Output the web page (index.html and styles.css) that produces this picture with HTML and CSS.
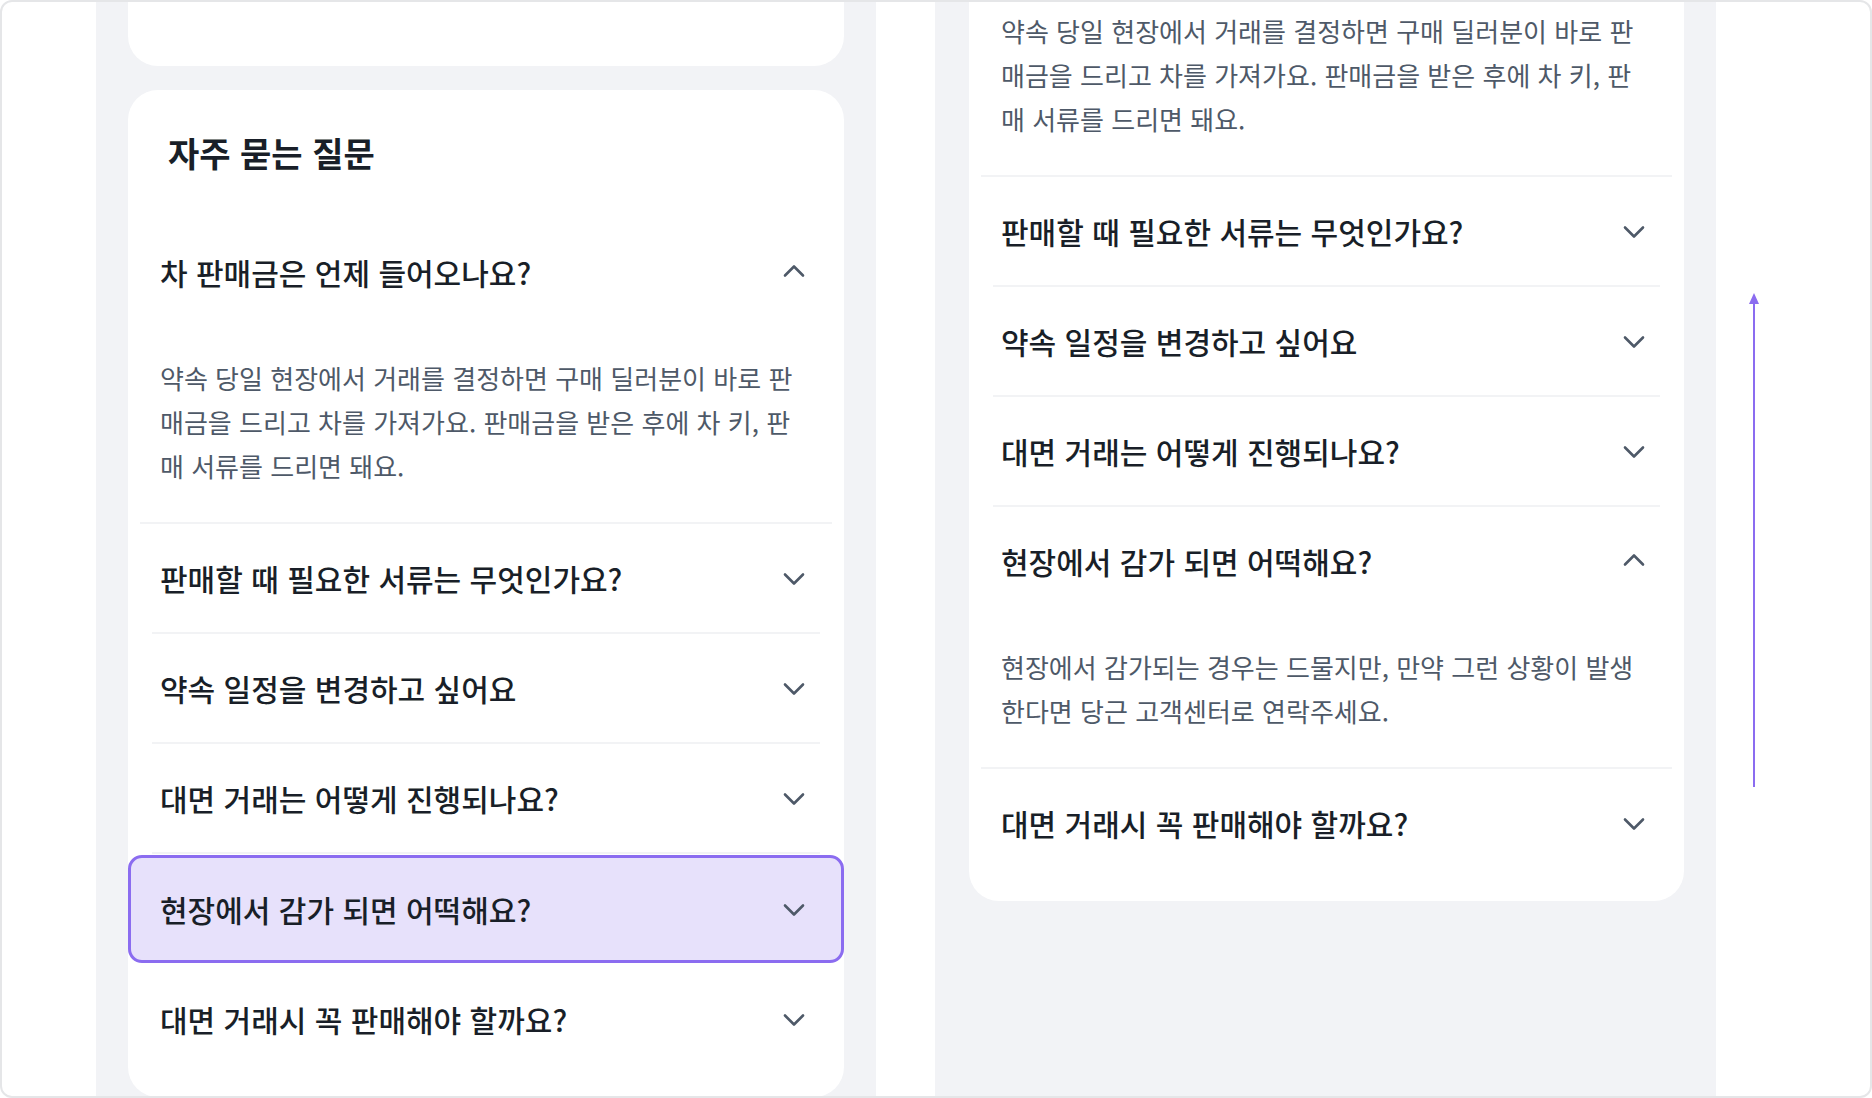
FILE: index.html
```html
<!DOCTYPE html>
<html lang="ko">
<head>
    <meta charset="UTF-8">
    <title>자주 묻는 질문</title>
    <link rel="stylesheet" href="styles.css">
</head>
<body>
    <div class="frame">
        <div class="blank-left"></div>

        <!-- left phone: list with a pressed item -->
        <section class="panel">
            <div class="card card-tail"></div>

            <div class="card faq">
                <h2 class="faq-title">자주 묻는 질문</h2>

                <div class="faq-item open">
                    <div class="question">
                        <span>차 판매금은 언제 들어오나요?</span>
                        <svg class="chevron" viewBox="0 0 24 24"><path d="M3 15.5 12 6.5 21 15.5"/></svg>
                    </div>
                    <p class="answer">약속 당일 현장에서 거래를 결정하면 구매 딜러분이 바로 판매금을 드리고 차를 가져가요. 판매금을 받은 후에 차 키, 판매 서류를 드리면 돼요.</p>
                </div>
                <div class="divider wide"></div>

                <div class="question">
                    <span>판매할 때 필요한 서류는 무엇인가요?</span>
                    <svg class="chevron" viewBox="0 0 24 24"><path d="M3 8.5 12 17.5 21 8.5"/></svg>
                </div>
                <div class="divider"></div>

                <div class="question">
                    <span>약속 일정을 변경하고 싶어요</span>
                    <svg class="chevron" viewBox="0 0 24 24"><path d="M3 8.5 12 17.5 21 8.5"/></svg>
                </div>
                <div class="divider"></div>

                <div class="question">
                    <span>대면 거래는 어떻게 진행되나요?</span>
                    <svg class="chevron" viewBox="0 0 24 24"><path d="M3 8.5 12 17.5 21 8.5"/></svg>
                </div>
                <div class="divider"></div>

                <div class="question pressed">
                    <span>현장에서 감가 되면 어떡해요?</span>
                    <svg class="chevron" viewBox="0 0 24 24"><path d="M3 8.5 12 17.5 21 8.5"/></svg>
                </div>

                <div class="question last">
                    <span>대면 거래시 꼭 판매해야 할까요?</span>
                    <svg class="chevron" viewBox="0 0 24 24"><path d="M3 8.5 12 17.5 21 8.5"/></svg>
                </div>
            </div>
        </section>

        <div class="gutter"></div>

        <!-- right phone: same list, scrolled down, item opened -->
        <section class="panel panel-right">
            <div class="card faq scrolled">
                <p class="answer cut">약속 당일 현장에서 거래를 결정하면 구매 딜러분이 바로 판매금을 드리고 차를 가져가요. 판매금을 받은 후에 차 키, 판매 서류를 드리면 돼요.</p>
                <div class="divider wide"></div>

                <div class="question">
                    <span>판매할 때 필요한 서류는 무엇인가요?</span>
                    <svg class="chevron" viewBox="0 0 24 24"><path d="M3 8.5 12 17.5 21 8.5"/></svg>
                </div>
                <div class="divider"></div>

                <div class="question">
                    <span>약속 일정을 변경하고 싶어요</span>
                    <svg class="chevron" viewBox="0 0 24 24"><path d="M3 8.5 12 17.5 21 8.5"/></svg>
                </div>
                <div class="divider"></div>

                <div class="question">
                    <span>대면 거래는 어떻게 진행되나요?</span>
                    <svg class="chevron" viewBox="0 0 24 24"><path d="M3 8.5 12 17.5 21 8.5"/></svg>
                </div>
                <div class="divider"></div>

                <div class="faq-item open">
                    <div class="question">
                        <span>현장에서 감가 되면 어떡해요?</span>
                        <svg class="chevron" viewBox="0 0 24 24"><path d="M3 15.5 12 6.5 21 15.5"/></svg>
                    </div>
                    <p class="answer">현장에서 감가되는 경우는 드물지만, 만약 그런 상황이 발생한다면 당근 고객센터로 연락주세요.</p>
                </div>
                <div class="divider wide"></div>

                <div class="question">
                    <span>대면 거래시 꼭 판매해야 할까요?</span>
                    <svg class="chevron" viewBox="0 0 24 24"><path d="M3 8.5 12 17.5 21 8.5"/></svg>
                </div>
            </div>
        </section>

        <div class="side">
            <svg class="scroll-arrow" width="12" height="494" viewBox="0 0 12 494">
                <path d="M6 0 11 11 1 11Z" fill="#8b6cf0"/>
                <rect x="5" y="9" width="2" height="485" fill="#8b6cf0"/>
            </svg>
        </div>
    </div>
</body>
</html>
```

FILE: styles.css
```css
body {
    margin: 0;
    padding: 0;
    background: #fff;
    font-family: "Noto Sans CJK KR", "Noto Sans", sans-serif;
    color: #191f28;
}
.frame {
    display: flex;
    width: 1872px;
    height: 1098px;
    box-sizing: border-box;
    border: 2px solid #e5e6e8;
    border-radius: 12px;
    overflow: hidden;
    background: #fff;
}
.blank-left {
    width: 94px;
    flex-shrink: 0;
}
.gutter {
    width: 59px;
    flex-shrink: 0;
}
.panel {
    width: 780px;
    flex-shrink: 0;
    box-sizing: border-box;
    padding: 0 32px;
    background: #f2f3f6;
    display: flex;
    flex-direction: column;
}
.panel-right {
    width: 781px;
    padding: 0 32px 0 34px;
}
.card {
    background: #fff;
    border-radius: 30px;
}
.card-tail {
    height: 64px;
    border-radius: 0 0 30px 30px;
    margin-bottom: 24px;
    flex-shrink: 0;
}
.faq {
    padding-bottom: 22px;
}
.faq.scrolled {
    border-radius: 0 0 30px 30px;
    padding-top: 7px;
    padding-bottom: 24px;
}
.faq-title {
    margin: 0;
    padding: 40px 40px 42px 40px;
    font-size: 34px;
    line-height: 46px;
    font-weight: 700;
    color: #191f28;
}
.question {
    display: flex;
    align-items: center;
    justify-content: space-between;
    height: 108px;
    box-sizing: border-box;
    padding: 0 38px 0 32px;
    font-size: 30px;
    font-weight: 500;
    color: #191f28;
}
.question.last {
    height: 112px;
}
.question.pressed {
    margin-top: 1px;
    background: #e7e1fb;
    border: 3px solid #8b6cf0;
    border-radius: 14px;
    padding: 0 35px 0 29px;
}
.chevron {
    width: 24px;
    height: 24px;
    fill: none;
    stroke: #4e5968;
    stroke-width: 2.6;
    stroke-linecap: round;
    stroke-linejoin: round;
    flex-shrink: 0;
}
.answer {
    margin: 0;
    padding: 30px 32px 34px 32px;
    font-size: 26px;
    line-height: 44px;
    color: #4e5968;
}
.answer.cut {
    padding-top: 0;
}
.divider {
    height: 2px;
    margin: 0 24px;
    background: #f2f3f5;
}
.divider.wide {
    margin: 0 12px;
}
.side {
    flex: 1;
    padding: 291px 0 0 32px;
}
.scroll-arrow {
    display: block;
}
```
